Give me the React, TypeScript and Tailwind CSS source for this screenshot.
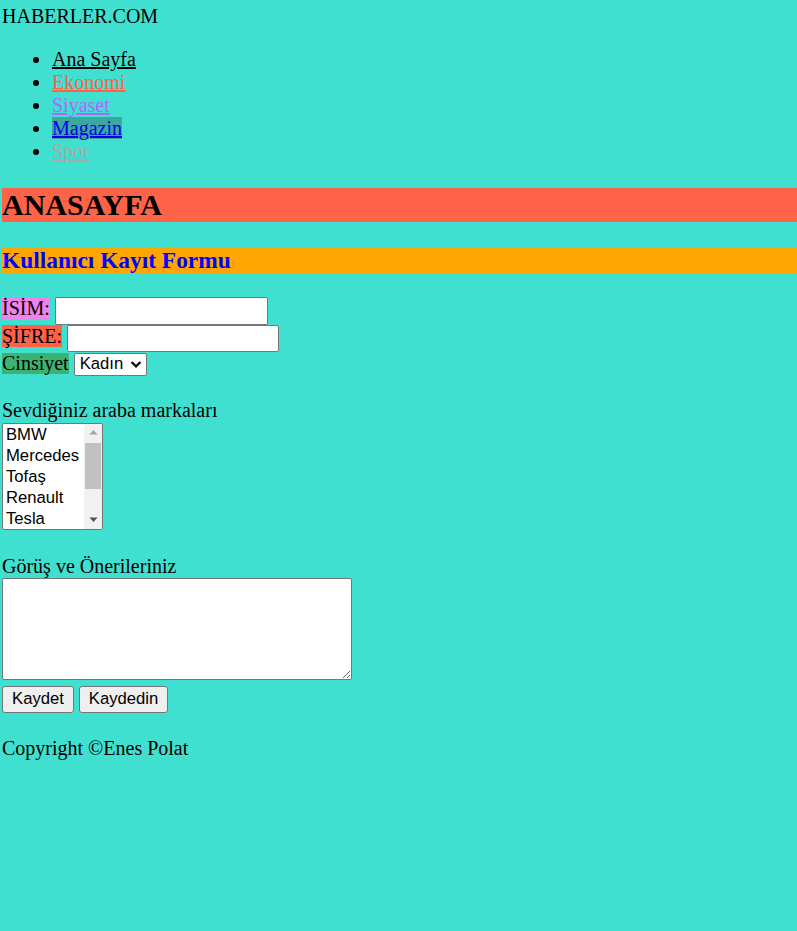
import React from "react";

export default function App() {
  const controlFont = "font-['Liberation_Sans',Arial,sans-serif] text-[16.67px]";
  return (
    <div className="min-h-[931px] bg-[#40E0D0] pl-[2px] pt-[4.5px] font-['Liberation_Serif','Times_New_Roman',serif] text-[20px] leading-[23px] text-black">
      <div>HABERLER.COM</div>
      <ul className="mt-[20.5px] list-disc pl-[50px]">
        <li>
          <a href="#" className="text-black underline">Ana Sayfa</a>
        </li>
        <li>
          <a href="#" className="text-[#FF6347] underline">Ekonomi</a>
        </li>
        <li>
          <a href="#" className="text-[#B266FF] underline">Siyaset</a>
        </li>
        <li>
          <a href="#" className="bg-[#3AA89F] text-[#0000EE] underline">Magazin</a>
        </li>
        <li>
          <a href="#" className="text-[#A9A9A9] underline">Spor</a>
        </li>
      </ul>

      <h1 className="mt-[25px] bg-[#FF6347] text-[30px] font-bold leading-[34px]">ANASAYFA</h1>

      <h2 className="mt-[25px] bg-[#FFA500] text-[23.4px] font-bold leading-[27px] text-[#0000FF]">
        Kullanıcı Kayıt Formu
      </h2>

      <form className="mt-[23.3px]" onSubmit={(e) => e.preventDefault()}>
        <div className="flex h-[27.7px] items-start">
          <span className="bg-[#EE82EE] leading-[22px]">İSİM:</span>
          <input
            type="text"
            className={`ml-[5px] h-[27.7px] w-[213px] rounded-[2px] border border-[#767676] bg-white px-[2px] ${controlFont}`}
          />
        </div>
        <div className="flex h-[27.7px] items-start">
          <span className="bg-[#FF6347] leading-[22px]">ŞİFRE:</span>
          <input
            type="password"
            className={`ml-[5px] mt-[0.5px] h-[26.5px] w-[212px] rounded-[2px] border border-[#767676] bg-white px-[2px] ${controlFont}`}
          />
        </div>
        <div className="flex h-[23px] items-start">
          <span className="bg-[#3CB371] leading-[21.5px]">Cinsiyet</span>
          <div
            className={`ml-[5px] mt-[0.6px] flex h-[22.4px] w-[73px] items-center rounded-[2px] border border-[#767676] bg-white pl-[5px] pr-[4px] ${controlFont} leading-[20px]`}
          >
            <span className="flex-1">Kadın</span>
            <svg width="12" height="9" viewBox="0 0 12 9" className="mt-[1px]">
              <path d="M1.5 2 L6 6.4 L10.5 2" fill="none" stroke="#111" strokeWidth="2.4" />
            </svg>
          </div>
        </div>

        <div className="mt-[23.5px]">Sevdiğiniz araba markaları</div>
        <div className="mt-[0.8px] flex h-[107px] w-[101px] overflow-hidden rounded-[2px] border border-[#767676] bg-white">
          <div className={`flex-1 pl-[3px] ${controlFont} leading-[21px]`}>
            <div>BMW</div>
            <div>Mercedes</div>
            <div>Tofaş</div>
            <div>Renault</div>
            <div>Tesla</div>
          </div>
          <div className="flex h-full w-[18px] flex-col bg-[#F1F1F1]">
            <div className="flex h-[17px] items-center justify-center">
              <svg width="9" height="6" viewBox="0 0 9 6">
                <path d="M0.5 5.5 L4.5 1 L8.5 5.5 Z" fill="#A3A3A3" />
              </svg>
            </div>
            <div className="mx-[1px] mt-[2px] h-[46px] bg-[#C1C1C1]" />
            <div className="flex-1" />
            <div className="flex h-[17px] items-center justify-center">
              <svg width="9" height="6" viewBox="0 0 9 6">
                <path d="M0.5 0.5 L4.5 5 L8.5 0.5 Z" fill="#505050" />
              </svg>
            </div>
          </div>
        </div>

        <div className="mt-[25.2px]">Görüş ve Önerileriniz</div>
        <textarea
          className={`block h-[102px] w-[350px] resize rounded-[2px] border border-[#767676] bg-white p-[2px] ${controlFont}`}
        />
        <div className="mt-[5.7px] flex gap-[5px]">
          <button
            type="submit"
            className={`h-[26.7px] w-[72px] rounded-[3px] border border-[#767676] bg-[#EFEFEF] text-black ${controlFont} leading-[20px]`}
          >
            Kaydet
          </button>
          <button
            type="submit"
            className={`h-[26.7px] w-[89px] rounded-[3px] border border-[#767676] bg-[#EFEFEF] text-black ${controlFont} leading-[20px]`}
          >
            Kaydedin
          </button>
        </div>
      </form>

      <div className="mt-[24px]">Copyright ©Enes Polat</div>
    </div>
  );
}
